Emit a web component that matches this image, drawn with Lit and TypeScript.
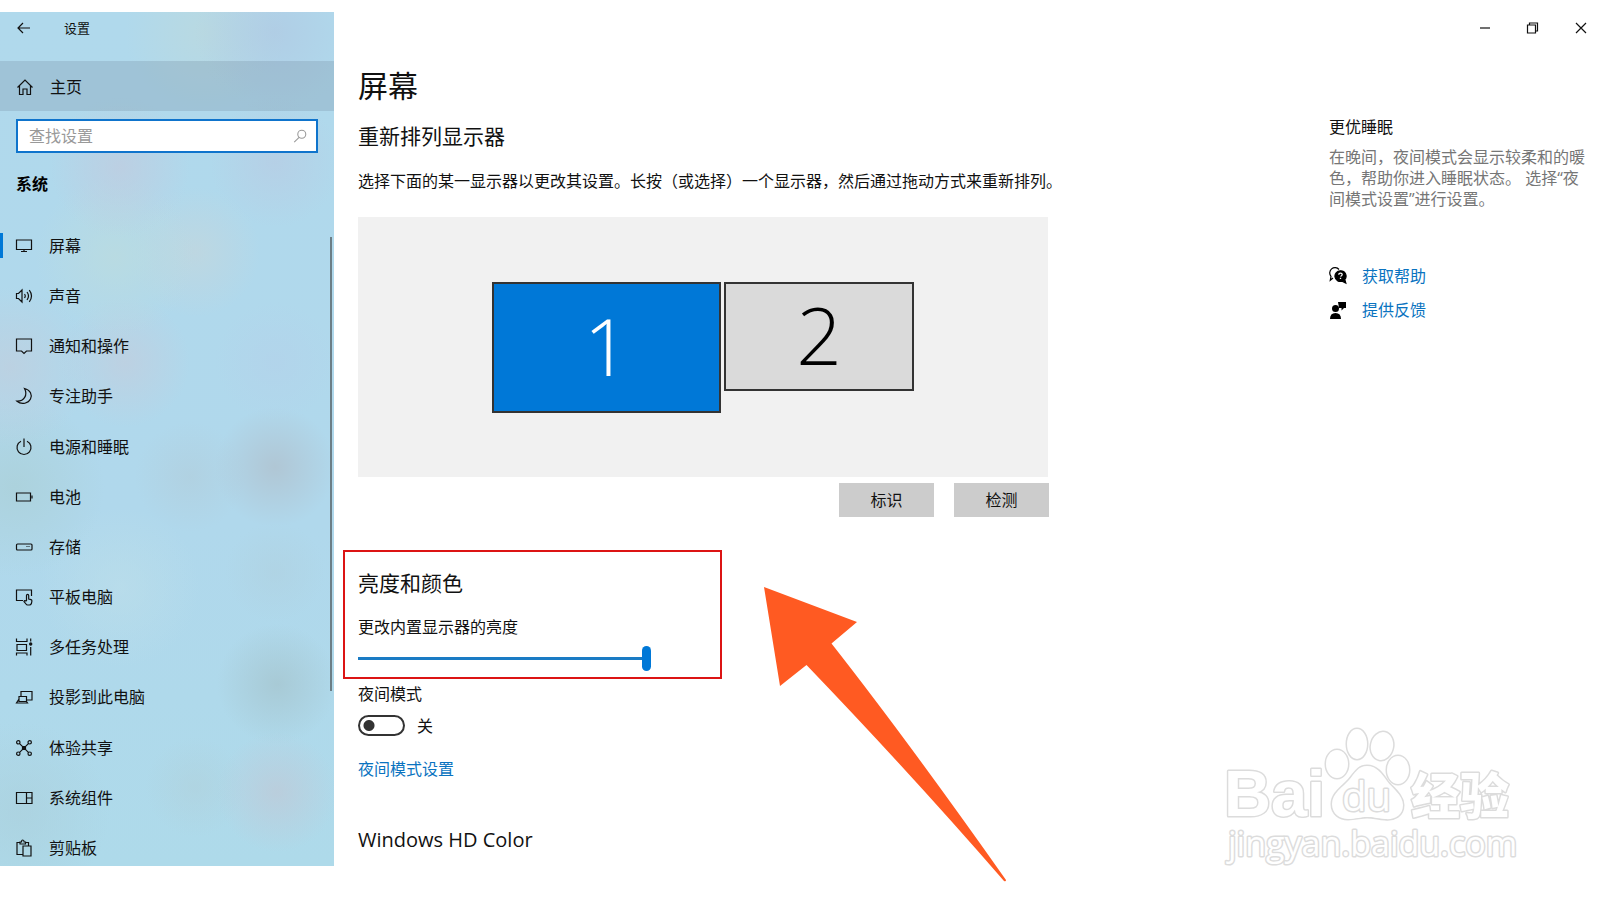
import { LitElement, html, css, svg, TemplateResult } from "lit";
import { customElement, property, state } from "lit/decorators.js";
import { classMap } from "lit/directives/class-map.js";

const icons: Record<string, TemplateResult> = {
  back: svg`<path d="M15 9H3M8 4L3 9l5 5"/>`,
  home: svg`<path d="M1.500 9.500L9 2l7.500 7.500M3.500 8V16.500h3.500v-5.500h4v5.500h3.500V8"/>`,
  search: svg`<circle cx="11" cy="7" r="4.500"/><path d="M8 10.500L2.500 16"/>`,
  display: svg`<path d="M1.500 3h15v9.500h-15zM9 12.500v2M6 14.500h6"/>`,
  sound: svg`<path d="M1.500 6.500h2l3.500-3.500v12l-3.500-3.500h-2zM9.500 7q1.500 2 0 4M12 5q3 4 0 8M14.300 3.200q4.400 5.800 0 11.600"/>`,
  notify: svg`<path d="M1.500 2h15v12h-5L9 16.500 6.500 14h-5z"/>`,
  moon: svg`<path d="M9.500 1.500C15.500 3 17.500 8 15.500 12S7 18.500 2 14.200C9 14.500 13 8 9.500 1.500z"/>`,
  power: svg`<path d="M9 .5V9M6 3.200a7 7 0 1 0 6 0"/>`,
  battery: svg`<path d="M1.500 5h14v8h-14zM17 7.500v3"/>`,
  storage: svg`<rect x="1.500" y="6" width="15.500" height="6" rx="1"/><path d="M11.500 8.500h1M13.500 8.500h1"/>`,
  tablet: svg`<path d="M8 12.500H1.500V2h15v6M11.500 13V7.500a1.100 1.100 0 0 1 2.200 0V11l2.300.6q1 .4.9 1.400l-.5 2.500q-.5 1.500-2 1.500h-1.800q-1 0-1.600-1L9 13.500q.4-1.600 2.500-.2"/>`,
  tasks: svg`<path d="M1.500.5v3h10.500v-3M2 6.500h9.500v6H2zM1.500 17.500v-2.500h10.500v2.500M15.700.5v3M15.700 9v8.500"/><circle cx="15.700" cy="6" r="1.100" fill="currentColor"/>`,
  project: svg`<path d="M6 8.500V3.500h11v8.500h-5.500M4 8.500h7.500v5H4zM4 11l-2.500 4h11l-1-1.500"/>`,
  share: svg`<path d="M4.600 4.600l8.800 8.800M13.400 4.600l-8.800 8.800M7.500 7.500h3v3h-3z"/><circle cx="3.300" cy="3.300" r="1.700"/><circle cx="14.700" cy="3.300" r="1.700"/><circle cx="3.300" cy="14.700" r="1.700"/><circle cx="14.700" cy="14.700" r="1.700"/>`,
  parts: svg`<path d="M1.500 3.500h15.500v11h-15.500zM11.500 3.500v11M11.500 9h5.500"/>`,
  clipboard: svg`<path d="M8 15.500H2V3.500h3M10.500 3.500h3v3M5 5V3h1.500q0-2 1.300-2t1.300 2h1.400v2zM8 7H16v10H8z"/>`,
  help: svg`<path d="M4 11l-2.700 2.300.7-4A5.200 5.200 0 0 1 10 2.500"/><path d="M11.500 3.800a5.300 5.300 0 1 0 1.500 10.300l3.800 2-1-3.600a5.300 5.300 0 0 0-4.300-8.700z" fill="currentColor"/><path d="M9.800 7.700q0-1.500 1.700-1.500t1.700 1.400q0 1-1.700 1.900M11.500 10.800v1.300" stroke="#fff" stroke-width="1.300"/>`,
  feedback: svg`<g fill="currentColor" stroke="none"><circle cx="6.500" cy="7.500" r="3.500"/><path d="M1 18q0-6 5.500-6t5.500 6zM9 1h8v6h-2l-2.500 2.500V7H10z"/></g>`,
  minimize: svg`<path d="M4 9h10"/>`,
  restore: svg`<path d="M3.500 6h8v8h-8zM5.500 6V4h8v8h-2"/>`,
  close: svg`<path d="M4 4l10 10M14 4L4 14"/>`,
};

@customElement("ui-icon")
class UiIcon extends LitElement {
  @property() name = "";
  static styles = css`
    :host { display: block; flex: none; width: 18px; height: 18px; }
    .glyph { display: block; width: 100%; height: 100%; fill: none; stroke: currentColor; stroke-width: 1.200; }
  `;
  render() {
    return html`<svg class="glyph" viewBox="0 0 18 18" aria-hidden="true">${icons[this.name]}</svg>`;
  }
}

const NAV: [string, string][] = [
  ["display", "屏幕"],
  ["sound", "声音"],
  ["notify", "通知和操作"],
  ["moon", "专注助手"],
  ["power", "电源和睡眠"],
  ["battery", "电池"],
  ["storage", "存储"],
  ["tablet", "平板电脑"],
  ["tasks", "多任务处理"],
  ["project", "投影到此电脑"],
  ["share", "体验共享"],
  ["parts", "系统组件"],
  ["clipboard", "剪贴板"],
];

@customElement("settings-nav")
class SettingsNav extends LitElement {
  @state() current = "display";
  static styles = css`
    * { box-sizing: border-box; }
    :host {
      position: relative;
      display: flex;
      flex-direction: column;
      background:
        radial-gradient(circle at 120px 155px, #c4c9dc99, #c4c9dc00 70px),
        radial-gradient(circle at 275px 150px, #b9cae299, #b9cae200 65px),
        radial-gradient(circle at 275px 20px, #b0c8e2aa, #b0c8e200 80px),
        radial-gradient(circle at 205px 20px, #bdd9dcaa, #bdd9dc00 80px),
        radial-gradient(circle at 115px 245px, #bddcddaa, #bddcdd00 80px),
        radial-gradient(circle at 195px 240px, #c4d6dcaa, #c4d6dc00 65px),
        radial-gradient(circle at 125px 350px, #c3cdddaa, #c3cddd00 65px),
        radial-gradient(circle at 10px 355px, #c1ceddaa, #c1cedd00 80px),
        radial-gradient(circle at 275px 350px, #b3d2eaaa, #b3d2ea00 60px),
        radial-gradient(circle at 275px 455px, #b0c2cfcc, #b0c2cf00 60px),
        radial-gradient(circle at 190px 465px, #b1cddb99, #b1cddb00 55px),
        radial-gradient(circle at 15px 475px, #aacfd5aa, #aacfd500 90px),
        radial-gradient(circle at 120px 575px, #bcdeeaaa, #bcdeea00 80px),
        radial-gradient(circle at 275px 560px, #b0d1e099, #b0d1e000 50px),
        radial-gradient(circle at 277px 672px, #a6c6d0cc, #a6c6d000 60px),
        radial-gradient(circle at 277px 780px, #bdcbd9cc, #bdcbd900 60px),
        radial-gradient(circle at 195px 775px, #b0d1dc99, #b0d1dc00 50px),
        radial-gradient(circle at 20px 800px, #abd0dcaa, #abd0dc00 90px),
        linear-gradient(#b0d9ec, #b0d8ec 60%, #aedaea);
      color: #111;
    }
    .bar { display: flex; align-items: center; height: 32px; margin-bottom: 17px; padding-left: 15px; gap: 31px; font-size: 13px; }
    button { padding: 0; border: 0; background: none; color: inherit; font: inherit; }
    a { color: inherit; text-decoration: none; }
    .home { display: flex; align-items: center; gap: 16px; height: 50px; padding: 2px 0 0 16px; background: #6c849640; }
    .search { display: flex; align-items: center; height: 34px; margin: 8px 16px 15px; padding: 0 8px 0 11px; border: 2px solid #0f74cc; background: #fff; color: #999; }
    .field { flex: 1; min-width: 0; padding: 0; border: 0; outline: 0; background: none; font: inherit; color: #111; }
    .field::placeholder { color: #999; opacity: 1; }
    .search ui-icon { width: 16px; height: 16px; }
    h2 { margin: 0 16px 28px; font-size: 16px; line-height: 32px; font-weight: 700; color: #000; }
    nav { flex: 1; display: flex; flex-direction: column; justify-content: space-between; }
    .item { position: relative; display: flex; align-items: center; height: 36px; padding-left: 15px; gap: 16px; }
    .current::before { content: ""; position: absolute; left: 0; top: 5px; width: 3px; height: 25px; background: #0078d7; }
    .thumb { position: absolute; right: 2px; top: 225px; width: 2px; height: 454px; background: #6c7e86; }
  `;
  render() {
    return html`
      <div class="bar"><button aria-label="返回"><ui-icon name="back"></ui-icon></button><span>设置</span></div>
      <a class="home" href="#home"><ui-icon name="home"></ui-icon>主页</a>
      <label class="search"><input class="field" type="text" aria-label="查找设置" placeholder="查找设置" /><ui-icon name="search"></ui-icon></label>
      <h2>系统</h2>
      <nav>
        ${NAV.map(([id, label]) => html`
          <a class=${classMap({ item: true, current: id === this.current })} href="#${id}" @click=${() => (this.current = id)}>
            <ui-icon name=${id}></ui-icon>${label}
          </a>`)}
      </nav>
      <div class="thumb"></div>
    `;
  }
}

@customElement("baidu-mark")
class BaiduMark extends LitElement {
  static styles = css`
    :host { display: block; width: 300px; height: 144px; pointer-events: none; }
    .mark { display: block; width: 100%; height: 100%; overflow: visible; fill: #fff; stroke: #dcdcdc; stroke-width: 3; paint-order: stroke; stroke-linejoin: round; }
    .latin { font: 700 65px "Liberation Sans", sans-serif; }
    .du { font: 400 40px "Open Sans", sans-serif; }
    .cjk { font: 900 49px "Noto Sans CJK SC", sans-serif; }
    .url { font: 400 34px "Open Sans", sans-serif; }
  `;
  render() {
    return html`
      <svg class="mark" viewBox="0 0 300 144" aria-hidden="true">
        <text class="latin" x="3" y="92">Bai</text>
        <ellipse cx="116" cy="40" rx="11" ry="14"/>
        <ellipse cx="136" cy="20" rx="10" ry="15"/>
        <ellipse cx="161" cy="22" rx="11" ry="14" transform="rotate(12 161 22)"/>
        <ellipse cx="177" cy="46" rx="11" ry="14"/>
        <path d="M146 42c10 0 15 8 20 15s16 14 16 24c0 11-9 15-18 14s-12-2-18-2-11 2-19 2-16-5-16-15c0-11 11-17 17-24s9-14 18-14z"/>
        <text class="du" x="121" y="87">du</text>
        <text class="cjk" x="190" y="90">经验</text>
        <text class="url" x="7" y="132">jingyan.baidu.com</text>
      </svg>
    `;
  }
}

@customElement("app-root")
class AppRoot extends LitElement {
  @state() night = false;
  static styles = css`
    * { box-sizing: border-box; }
    :host {
      position: relative;
      display: grid;
      grid-template-columns: 334px 1fr;
      min-height: 100vh;
      box-sizing: border-box;
      padding: 12px 0 34px;
      background: #fff;
      color: #111;
      font: 400 16px/24px "Open Sans", "Noto Sans CJK SC", sans-serif;
    }
    h1, h2, h3, p { margin: 0; font-weight: 400; }
    a { color: #0a73c0; text-decoration: none; }
    button { border: 0; color: inherit; font: inherit; }
    .page { display: grid; grid-template-columns: 1fr 271px; grid-template-rows: 32px 1fr; padding-left: 24px; }
    .controls { grid-column: 1 / -1; display: flex; justify-content: flex-end; gap: 30px; padding-right: 10px; }
    .control { display: grid; place-items: center; width: 18px; padding: 0; background: none; }
    main { position: relative; }
    h1 { margin-top: 22px; font-size: 30px; line-height: 40px; }
    h2 { font-size: 21px; line-height: 28px; }
    .arrange { margin-top: 16px; }
    .intro { margin-top: 19px; white-space: nowrap; }
    .stage { display: flex; justify-content: center; align-items: flex-start; gap: 3px; width: 690px; height: 260px; margin-top: 24px; padding-top: 65px; background: #f1f1f1; }
    .monitor { display: grid; place-items: center; padding: 0 0 6px; border: 2px solid #333; font: 300 80px/80px "Open Sans", sans-serif; }
    .first { width: 229px; height: 131px; background: #0078d7; color: #fff; }
    .second { width: 190px; height: 109px; background: #dadada; color: #000; }
    .actions { display: flex; justify-content: flex-end; gap: 20px; width: 691px; margin-top: 6px; }
    .action { width: 95px; height: 34px; padding: 0; background: #ccc; }
    .bright { width: 379px; margin: 33px 0 3px -15px; padding: 17px 13px 6px; border: 2px solid #dc1414; }
    .label { display: block; margin: 18px 0 7px; }
    .slider { display: block; width: 293px; height: 25px; margin: 0; appearance: none; background: linear-gradient(#1a7bc4, #1a7bc4) center / 100% 3px no-repeat; }
    .slider::-webkit-slider-thumb { appearance: none; width: 9px; height: 25px; border-radius: 5px; background: #0078d7; }
    .switch { display: flex; align-items: center; gap: 12px; height: 21px; margin: 9px 0 21px; }
    .toggle { width: 47px; height: 21px; margin: 0; appearance: none; border: 2px solid #333; border-radius: 11px; background: radial-gradient(circle at 9px 50%, #333 5px, transparent 6px); }
    .toggle:checked { background: radial-gradient(circle at 33px 50%, #fff 5px, #0078d7 6px); }
    .hd { margin-top: 45px; font-size: 20px; }
    .arrow { position: absolute; left: 405px; top: 542px; width: 244px; height: 296px; fill: #ff5a22; pointer-events: none; }
    .side { padding: 71px 15px 0 0; }
    .sleep { font-size: 16px; }
    .tip { margin: 8px 0 54px; line-height: 21px; color: #767676; }
    .more { display: flex; align-items: center; gap: 15px; margin-bottom: 10px; }
    .more ui-icon { color: #000; }
    baidu-mark { position: absolute; right: 79px; bottom: 32px; }
  `;
  render() {
    return html`
      <settings-nav></settings-nav>
      <div class="page">
        <div class="controls">
          <button class="control" aria-label="最小化"><ui-icon name="minimize"></ui-icon></button>
          <button class="control" aria-label="还原"><ui-icon name="restore"></ui-icon></button>
          <button class="control" aria-label="关闭"><ui-icon name="close"></ui-icon></button>
        </div>
        <main>
          <h1>屏幕</h1>
          <h2 class="arrange">重新排列显示器</h2>
          <p class="intro">选择下面的某一显示器以更改其设置。长按（或选择）一个显示器，然后通过拖动方式来重新排列。</p>
          <div class="stage">
            <button class="monitor first">1</button>
            <button class="monitor second">2</button>
          </div>
          <div class="actions">
            <button class="action">标识</button>
            <button class="action">检测</button>
          </div>
          <section class="bright">
            <h2>亮度和颜色</h2>
            <label class="label" for="brightness">更改内置显示器的亮度</label>
            <input class="slider" id="brightness" type="range" min="0" max="100" value="100" />
          </section>
          <label for="night">夜间模式</label>
          <div class="switch">
            <input class="toggle" id="night" type="checkbox" role="switch" .checked=${this.night}
              @change=${(e: Event) => (this.night = (e.target as HTMLInputElement).checked)} />
            <span>${this.night ? "开" : "关"}</span>
          </div>
          <a href="#night-settings">夜间模式设置</a>
          <h2 class="hd">Windows HD Color</h2>
          <svg class="arrow" viewBox="0 0 244 296" aria-hidden="true">
            <path d="M1 1L94 36 68.500 57.500Q145 155 243 294q0 2-2 1Q150 190 43.500 79L17 100z"/>
          </svg>
        </main>
        <aside class="side">
          <h3 class="sleep">更优睡眠</h3>
          <p class="tip">在晚间，夜间模式会显示较柔和的暖色，帮助你进入睡眠状态。 选择“夜间模式设置”进行设置。</p>
          <a class="more" href="#help"><ui-icon name="help"></ui-icon>获取帮助</a>
          <a class="more" href="#feedback"><ui-icon name="feedback"></ui-icon>提供反馈</a>
        </aside>
      </div>
      <baidu-mark></baidu-mark>
    `;
  }
}
